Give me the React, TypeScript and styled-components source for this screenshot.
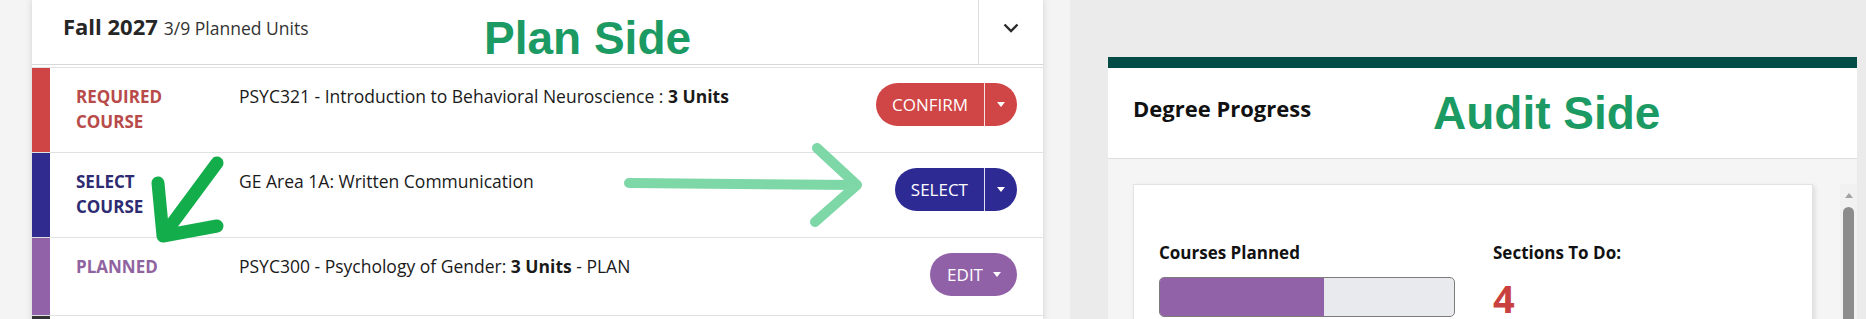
import React from 'react';
import styled, { createGlobalStyle } from 'styled-components';

const GlobalStyle = createGlobalStyle`
  html, body {
    margin: 0;
    padding: 0;
    overflow: hidden;
    background: #ebebeb;
  }
  body {
    font-family: "Open Sans", "Liberation Sans", sans-serif;
    color: #1a1a1a;
  }
  * {
    box-sizing: border-box;
  }
`;

const Page = styled.div`
  position: relative;
  display: flex;
  width: 1866px;
  height: 319px;
  overflow: hidden;
`;

/* ---------- plan side ---------- */

const PlanColumn = styled.div`
  width: 1070px;
  flex-shrink: 0;
  background: #f4f4f4;
  padding: 0 27px 0 32px;
`;

const PlanPanel = styled.section`
  background: #fff;
  min-height: 360px;
  box-shadow: 0 0 7px rgba(0, 0, 0, 0.14);
`;

const TermHeader = styled.div`
  display: flex;
  height: 65px;
  border-bottom: 1px solid #d8d8d8;
`;

const TermTitle = styled.div`
  flex: 1;
  display: flex;
  align-items: baseline;
  gap: 6px;
  padding: 11px 0 0 31px;
`;

const TermName = styled.span`
  font-size: 22px;
  font-weight: 700;
  line-height: 30px;
  color: #262626;
`;

const TermUnits = styled.span`
  font-size: 17.5px;
  color: #333;
`;

const ToggleCell = styled.div`
  width: 65px;
  border-left: 1px solid #dcdcdc;
  display: flex;
  justify-content: center;
  padding-top: 23px;
`;

const RowList = styled.div`
  margin-top: 2px;
  border-top: 1px solid #e2e2e2;
`;

const CourseRow = styled.div`
  display: flex;
  align-items: stretch;
  border-bottom: 1px solid #e1e1e1;
`;

const StatusBar = styled.div<{ $color: string }>`
  width: 18px;
  flex-shrink: 0;
  background: ${(p) => p.$color};
`;

const RowBody = styled.div`
  flex: 1;
  display: flex;
  align-items: flex-start;
  min-height: 77px;
  padding: 16px 26px 18px 26px;
`;

const StatusLabel = styled.div<{ $color: string }>`
  width: 163px;
  padding-right: 43px;
  flex-shrink: 0;
  font-size: 17px;
  font-weight: 700;
  line-height: 25px;
  text-transform: uppercase;
  color: ${(p) => p.$color};
`;

const CourseText = styled.div`
  flex: 1;
  font-size: 17.5px;
  line-height: 25px;
  color: #1a1a1a;

  b {
    font-weight: 700;
  }
`;

const SplitButton = styled.div<{ $color: string }>`
  display: flex;
  height: 43px;
  margin-top: -1px;
  border-radius: 22px;
  overflow: hidden;
  background: ${(p) => p.$color};
  color: #fff;
`;

const ButtonMain = styled.button`
  height: 100%;
  border: 0;
  padding: 0 16px;
  background: transparent;
  color: inherit;
  font-family: "Open Sans", "Liberation Sans", sans-serif;
  font-size: 17px;
  cursor: pointer;
`;

const ButtonCaret = styled.button`
  width: 33px;
  height: 100%;
  border: 0;
  border-left: 1px solid rgba(255, 255, 255, 0.85);
  background: transparent;
  display: flex;
  align-items: center;
  justify-content: center;
  cursor: pointer;
`;

const EditButton = styled.button<{ $color: string }>`
  height: 43px;
  margin-top: -1px;
  border: 0;
  border-radius: 22px;
  padding: 0 16px 0 17px;
  display: flex;
  align-items: center;
  gap: 10px;
  background: ${(p) => p.$color};
  color: #fff;
  font-family: "Open Sans", "Liberation Sans", sans-serif;
  font-size: 17px;
  cursor: pointer;
`;

const Caret = styled.span`
  display: inline-block;
  width: 0;
  height: 0;
  border-left: 4px solid transparent;
  border-right: 4px solid transparent;
  border-top: 5px solid #fff;
`;

/* ---------- audit side ---------- */

const AuditColumn = styled.div`
  flex: 1;
  background: #ebebeb;
  padding: 57px 9px 0 38px;
`;

const AuditCard = styled.section`
  background: #fff;
  border-top: 11px solid #034d46;
`;

const AuditHeader = styled.div`
  height: 91px;
  display: flex;
  align-items: center;
  padding: 0 25px 10px;
  border-bottom: 1px solid #dedede;
`;

const AuditTitle = styled.h2`
  margin: 0;
  font-size: 22px;
  font-weight: 700;
  color: #111;
`;

const AuditBody = styled.div`
  display: flex;
  background: #f5f5f5;
  padding: 25px 0 0 25px;
  height: 200px;
`;

const StatsCard = styled.div`
  flex: 1;
  margin-right: 27px;
  background: #fff;
  border: 1px solid #e3e3e3;
  box-shadow: 2px 2px 5px rgba(0, 0, 0, 0.1);
  padding: 56px 25px 0;
  display: grid;
  grid-template-columns: 296px 1fr;
  column-gap: 38px;
  align-content: start;
`;

const StatLabel = styled.div`
  font-size: 17px;
  font-weight: 700;
  line-height: 24px;
  color: #111;
`;

const ProgressTrack = styled.div`
  margin-top: 12px;
  height: 40px;
  border: 1px solid #7c7c7c;
  border-radius: 5px;
  background: #e8eaed;
  overflow: hidden;
`;

const ProgressFill = styled.div`
  height: 100%;
  background: #9262a8;
`;

const StatValue = styled.div`
  margin-top: 13px;
  font-size: 38px;
  font-weight: 700;
  line-height: 40px;
  color: #c9413f;
`;

const ScrollTrack = styled.div`
  width: 17px;
  flex-shrink: 0;
  background: #f1f1f1;
  display: flex;
  flex-direction: column;
  align-items: center;
  padding-top: 9px;
`;

const ScrollArrow = styled.span`
  width: 0;
  height: 0;
  border-left: 4px solid transparent;
  border-right: 4px solid transparent;
  border-bottom: 5px solid #a3a3a3;
`;

const ScrollThumb = styled.div`
  margin-top: 9px;
  width: 11px;
  height: 200px;
  border-radius: 6px;
  background: #8c8c8c;
`;

/* ---------- annotations ---------- */

const Note = styled.div<{ $left: number; $top: number }>`
  position: absolute;
  left: ${(p) => p.$left}px;
  top: ${(p) => p.$top}px;
  font-family: "Liberation Sans", Arial, sans-serif;
  font-size: 46px;
  font-weight: 700;
  line-height: 46px;
  color: #1b9a63;
  white-space: nowrap;
  pointer-events: none;
`;

const Marks = styled.svg`
  position: absolute;
  left: 0;
  top: 0;
  pointer-events: none;
`;

type Course = {
  status: string;
  bar: string;
  label: string;
  text: React.ReactNode;
  action: 'confirm' | 'select' | 'edit';
  button: string;
};

const courses: Course[] = [
  {
    status: 'Required Course',
    bar: '#cf4545',
    label: '#b84a49',
    text: (
      <>
        PSYC321 - Introduction to Behavioral Neuroscience : <b>3 Units</b>
      </>
    ),
    action: 'confirm',
    button: '#d04545',
  },
  {
    status: 'Select Course',
    bar: '#2f2b8f',
    label: '#2e2b72',
    text: 'GE Area 1A: Written Communication',
    action: 'select',
    button: '#2e2a94',
  },
  {
    status: 'Planned',
    bar: '#9262a8',
    label: '#8f63a0',
    text: (
      <>
        PSYC300 - Psychology of Gender: <b>3 Units</b> - PLAN
      </>
    ),
    action: 'edit',
    button: '#9161a8',
  },
];

const RowAction = ({ course }: { course: Course }) => {
  if (course.action === 'edit') {
    return (
      <EditButton $color={course.button}>
        EDIT
        <Caret />
      </EditButton>
    );
  }
  return (
    <SplitButton $color={course.button}>
      <ButtonMain>{course.action === 'confirm' ? 'CONFIRM' : 'SELECT'}</ButtonMain>
      <ButtonCaret>
        <Caret />
      </ButtonCaret>
    </SplitButton>
  );
};

export default function App() {
  return (
    <Page>
      <GlobalStyle />
      <PlanColumn>
        <PlanPanel>
          <TermHeader>
            <TermTitle>
              <TermName>Fall 2027</TermName>
              <TermUnits>3/9 Planned Units</TermUnits>
            </TermTitle>
            <ToggleCell>
              <svg width="16" height="10" viewBox="0 0 16 10">
                <polyline
                  points="1.5,1.5 8,8 14.5,1.5"
                  fill="none"
                  stroke="#2b2b2b"
                  strokeWidth="2.4"
                />
              </svg>
            </ToggleCell>
          </TermHeader>
          <RowList>
            {courses.map((c) => (
              <CourseRow key={c.status}>
                <StatusBar $color={c.bar} />
                <RowBody>
                  <StatusLabel $color={c.label}>{c.status}</StatusLabel>
                  <CourseText>{c.text}</CourseText>
                  <RowAction course={c} />
                </RowBody>
              </CourseRow>
            ))}
            <CourseRow>
              <StatusBar $color="#333" />
              <RowBody />
            </CourseRow>
          </RowList>
        </PlanPanel>
      </PlanColumn>

      <AuditColumn>
        <AuditCard>
          <AuditHeader>
            <AuditTitle>Degree Progress</AuditTitle>
          </AuditHeader>
          <AuditBody>
            <StatsCard>
              <div>
                <StatLabel>Courses Planned</StatLabel>
                <ProgressTrack>
                  <ProgressFill style={{ width: '55.8%' }} />
                </ProgressTrack>
              </div>
              <div>
                <StatLabel>Sections To Do:</StatLabel>
                <StatValue>4</StatValue>
              </div>
            </StatsCard>
            <ScrollTrack>
              <ScrollArrow />
              <ScrollThumb />
            </ScrollTrack>
          </AuditBody>
        </AuditCard>
      </AuditColumn>

      <Note $left={484} $top={15}>Plan Side</Note>
      <Note $left={1433} $top={90}>Audit Side</Note>

      <Marks width="1866" height="319" viewBox="0 0 1866 319">
        <path
          d="M217 163 L163 236 M158 183 L163 236 L217 226"
          fill="none"
          stroke="#14ad4b"
          strokeWidth="13"
          strokeLinecap="round"
          strokeLinejoin="round"
        />
        <path
          d="M629 183 L857 185 M817 148 L857 185 L815 222"
          fill="none"
          stroke="#7dd7a6"
          strokeWidth="10"
          strokeLinecap="round"
          strokeLinejoin="round"
        />
      </Marks>
    </Page>
  );
}
